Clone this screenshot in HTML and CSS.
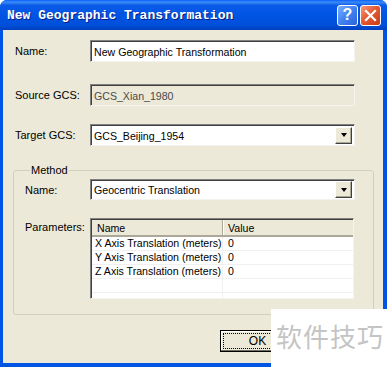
FILE: index.html
```html
<!DOCTYPE html>
<html lang="en">
<head>
    <meta charset="UTF-8">
    <title>New Geographic Transformation</title>
    <link rel="stylesheet" href="styles.css">
</head>
<body>
    <div class="window">
        <div class="titlebar">
            <span class="title">New Geographic Transformation</span>
            <div class="title-btns">
                <span class="tbtn help">?</span>
                <span class="tbtn close">
                    <svg width="13" height="13" viewBox="0 0 13 13">
                        <path d="M2 2 L11 11 M11 2 L2 11" stroke="#fff" stroke-width="2.2" stroke-linecap="square"/>
                    </svg>
                </span>
            </div>
        </div>

        <div class="client">
            <div class="row row-name">
                <label class="lbl">Name:</label>
                <div class="field">New Geographic Transformation</div>
            </div>
            <div class="row row-source">
                <label class="lbl">Source GCS:</label>
                <div class="field disabled">GCS_Xian_1980</div>
            </div>
            <div class="row row-target">
                <label class="lbl">Target GCS:</label>
                <div class="field combo">
                    <span>GCS_Beijing_1954</span>
                    <span class="drop"><i class="arrow"></i></span>
                </div>
            </div>

            <fieldset class="group">
                <legend>Method</legend>
                <div class="row row-method">
                    <label class="lbl">Name:</label>
                    <div class="field combo">
                        <span>Geocentric Translation</span>
                        <span class="drop"><i class="arrow"></i></span>
                    </div>
                </div>
                <div class="row row-params">
                    <label class="lbl">Parameters:</label>
                    <div class="listview">
                        <div class="lv-head">
                            <span class="c1">Name</span>
                            <span class="c2">Value</span>
                        </div>
                        <div class="lv-row"><span class="c1">X Axis Translation (meters)</span><span class="c2">0</span></div>
                        <div class="lv-row"><span class="c1">Y Axis Translation (meters)</span><span class="c2">0</span></div>
                        <div class="lv-row"><span class="c1">Z Axis Translation (meters)</span><span class="c2">0</span></div>
                        <div class="lv-row"><span class="c1"></span><span class="c2"></span></div>
                        <div class="lv-row"><span class="c1"></span><span class="c2"></span></div>
                    </div>
                </div>
            </fieldset>

            <div class="buttons">
                <button class="btn"><span class="focus">OK</span></button>
            </div>
        </div>

        <div class="watermark">软件技巧</div>
    </div>
</body>
</html>
```

FILE: styles.css
```css
* {
    box-sizing: border-box;
}
body {
    margin: 0;
    font-family: "Liberation Sans", Arial, sans-serif;
    font-size: 11px;
    color: #000;
    background: #fff;
}
.window {
    position: relative;
    width: 387px;
    height: 367px;
    background: #0054e3;
    border-radius: 7px 7px 0 0;
    overflow: hidden;
    display: flex;
    flex-direction: column;
}
.titlebar {
    height: 30px;
    flex: none;
    display: flex;
    align-items: center;
    justify-content: space-between;
    padding: 0 6px 0 7px;
    background: linear-gradient(to bottom, #0a60ff 0%, #3b8cf6 7%, #0a5ae8 18%, #0054e3 55%, #004fd8 85%, #003fbf 100%);
}
.title {
    font-family: "Liberation Mono", monospace;
    font-weight: bold;
    font-size: 13px;
    color: #fff;
    text-shadow: 1px 1px 0 #0a1e80;
}
.title-btns {
    display: flex;
    gap: 2px;
}
.tbtn {
    width: 21px;
    height: 21px;
    border: 1px solid #fff;
    border-radius: 3px;
    display: flex;
    align-items: center;
    justify-content: center;
    color: #fff;
}
.help {
    background: linear-gradient(135deg, #7aaeff 0%, #4282f0 50%, #2a62dc 100%);
    font-weight: bold;
    font-size: 16px;
}
.close {
    background: linear-gradient(135deg, #f59a7c 0%, #e35a33 45%, #c83c18 100%);
}
.client {
    flex: 1;
    margin: 0 4px 4px 3px;
    background: #ece9d8;
    padding: 10px 7px 0 10px;
    display: flex;
    flex-direction: column;
}
.row {
    display: flex;
    align-items: center;
}
.lbl {
    width: 77px;
    padding-left: 2px;
    flex: none;
}
.field {
    width: 265px;
    height: 22px;
    background: #fff;
    border: 1px solid;
    border-color: #808080 #f4f3ee #f4f3ee #808080;
    box-shadow: inset 1px 1px 0 #404040;
    padding: 1px 0 0 3px;
    font-size: 10.6px;
    display: flex;
    align-items: center;
    white-space: nowrap;
}
.field.disabled {
    background: #ece9d8;
    color: #4a4a4a;
}
.row-source {
    margin-top: 22px;
}
.row-target {
    margin-top: 18px;
}
.combo {
    justify-content: space-between;
    padding-right: 2px;
}
.drop {
    width: 17px;
    height: 17px;
    background: #ece9d8;
    border: 1px solid;
    border-color: #fff #404040 #404040 #fff;
    box-shadow: inset -1px -1px 0 #aca899;
    display: flex;
    align-items: center;
    justify-content: center;
    margin-top: -1px;
}
.arrow {
    width: 0;
    height: 0;
    border-left: 3.5px solid transparent;
    border-right: 3.5px solid transparent;
    border-top: 4px solid #000;
}
.group {
    margin: 18px 0 0 0;
    width: 361px;
    height: 151px;
    border: 1px solid #d0d0bf;
    border-radius: 3px;
    padding: 3px 0 0 10px;
}
.group legend {
    padding: 0 1px;
    margin-left: 6px;
    font-size: 11px;
}
.group .lbl {
    width: 66px;
    padding-left: 1px;
}
.row-method .field {
    height: 21px;
}
.row-params {
    margin-top: 18px;
    align-items: flex-start;
}
.row-params .lbl {
    margin-top: 3px;
}
.listview {
    width: 264px;
    height: 81px;
    background: #fff;
    border: 1px solid;
    border-color: #808080 #f4f3ee #f4f3ee #808080;
    box-shadow: inset 1px 1px 0 #404040;
    padding: 1px 0 0 1px;
    overflow: hidden;
    font-size: 10.6px;
}
.lv-head {
    display: flex;
    height: 17px;
    background: #ece9d8;
    border-bottom: 2px solid #aca899;
}
.lv-head span {
    display: flex;
    align-items: center;
}
.lv-head .c1 {
    border-right: 1px solid #aca899;
    box-shadow: 1px 0 0 #fff;
}
.c1 {
    width: 131px;
    padding-left: 5px;
    flex: none;
    white-space: nowrap;
}
.c2 {
    flex: 1;
    padding-left: 5px;
}
.lv-row {
    display: flex;
    height: 14px;
    border-bottom: 1px solid #f0f0f0;
    line-height: 13px;
}
.lv-row .c1 {
    border-right: 1px solid #f0f0f0;
    padding-left: 3px;
}
.lv-row .c2 {
    padding-left: 5px;
}
.buttons {
    display: flex;
    justify-content: flex-end;
    margin-top: 15px;
    padding-right: 81px;
}
.btn {
    width: 75px;
    height: 22px;
    font-family: "Liberation Sans", Arial, sans-serif;
    font-size: 12px;
    background: #ece9d8;
    border: 1px solid #000;
    box-shadow: inset -1px -1px 0 #716f64, inset 1px 1px 0 #fff;
    padding: 2px;
}
.focus {
    display: block;
    border: 1px dotted #000;
    height: 100%;
    line-height: 14px;
}
.watermark {
    position: absolute;
    left: 271px;
    top: 309px;
    right: 0;
    bottom: 0;
    background: #fff;
    color: #c4c4c4;
    font-family: "Noto Sans CJK SC", sans-serif;
    font-size: 26px;
    padding: 8px 0 0 5px;
    letter-spacing: 1px;
}
```
